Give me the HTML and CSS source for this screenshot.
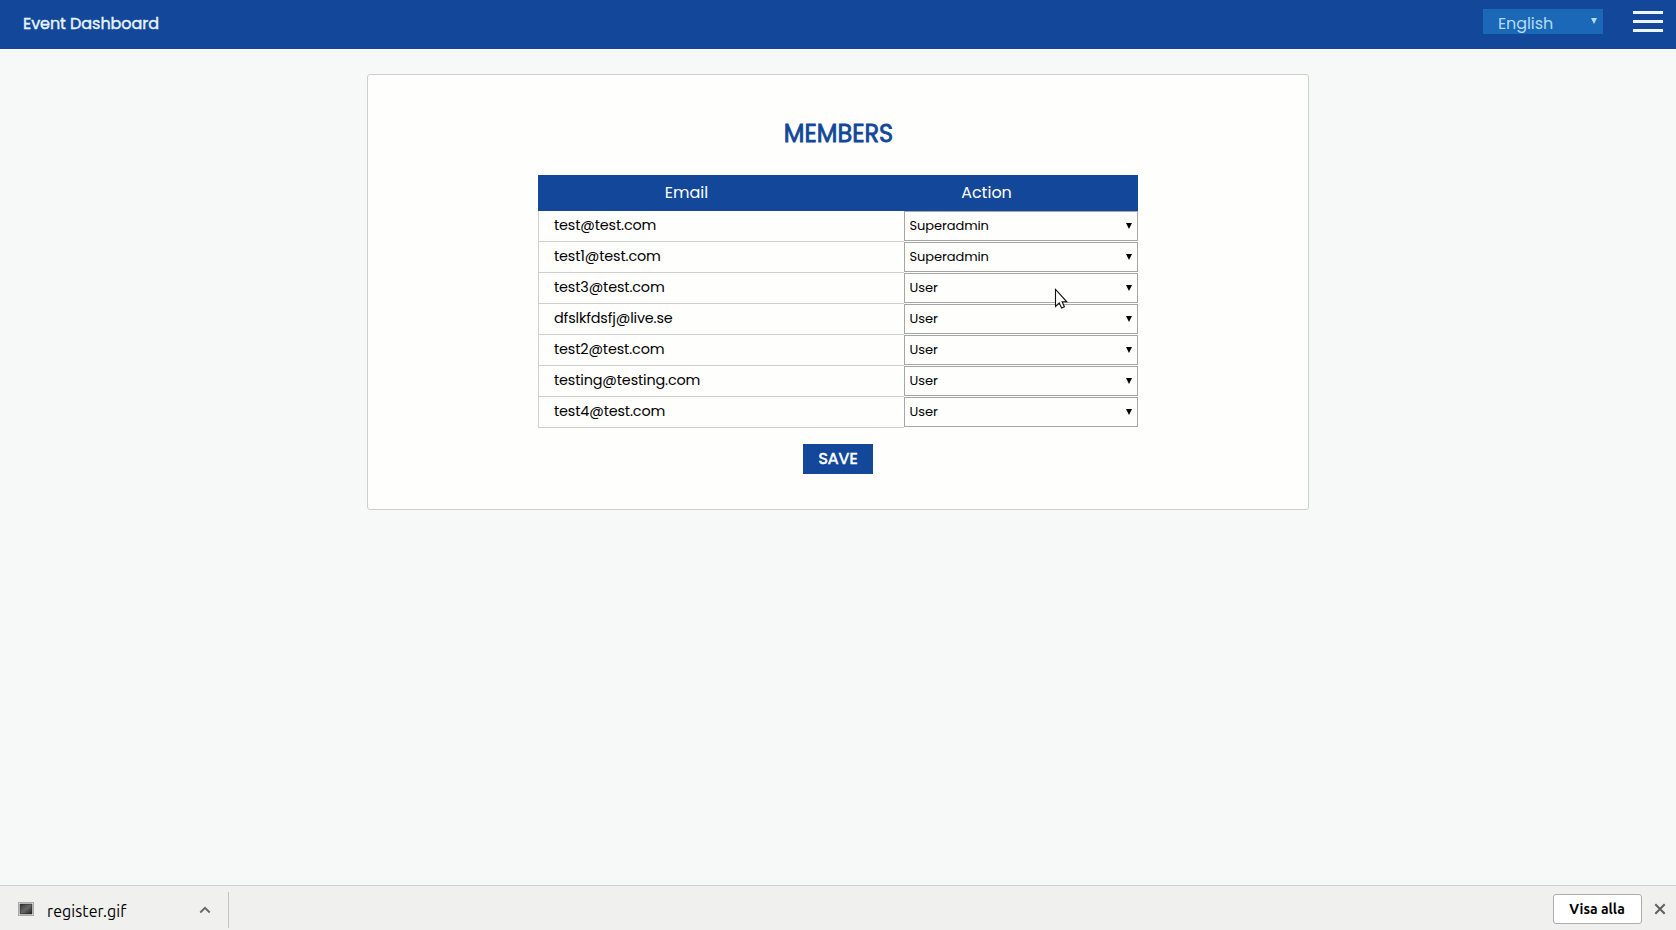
FILE: index.html
```html
<!DOCTYPE html>
<html lang="en">
<head>
<meta charset="utf-8">
<title>Event Dashboard</title>
<link rel="stylesheet" href="styles.css">
</head>
<body>
<header class="topbar">
  <span class="brand">Event Dashboard</span>
  <div class="tools">
    <div class="language"><span>English</span><i class="arrow arrow-light"></i></div>
    <div class="menu"><i></i><i></i><i></i></div>
  </div>
</header>
<main class="content">
  <section class="card">
    <h1 class="title">MEMBERS</h1>
    <div class="table">
      <div class="head"><span class="head-email">Email</span><span class="head-action">Action</span></div>
      <div class="row"><span class="email">test@test.com</span><div class="select"><span>Superadmin</span><i class="arrow"></i></div></div>
      <div class="row"><span class="email">test1@test.com</span><div class="select"><span>Superadmin</span><i class="arrow"></i></div></div>
      <div class="row"><span class="email">test3@test.com</span><div class="select"><span>User</span><i class="arrow"></i></div></div>
      <div class="row"><span class="email">dfslkfdsfj@live.se</span><div class="select"><span>User</span><i class="arrow"></i></div></div>
      <div class="row"><span class="email">test2@test.com</span><div class="select"><span>User</span><i class="arrow"></i></div></div>
      <div class="row"><span class="email">testing@testing.com</span><div class="select"><span>User</span><i class="arrow"></i></div></div>
      <div class="row"><span class="email">test4@test.com</span><div class="select"><span>User</span><i class="arrow"></i></div></div>
    </div>
    <button class="save">SAVE</button>
  </section>
</main>
<footer class="downloads">
  <div class="file">
    <svg class="thumb" width="16" height="14" viewBox="0 0 16 14"><defs><linearGradient id="g" x1="0" y1="0" x2="1" y2="1"><stop offset="0" stop-color="#333"/><stop offset=".5" stop-color="#666"/><stop offset="1" stop-color="#222"/></linearGradient></defs><rect x=".5" y=".5" width="15" height="13" fill="#f4f4f4" stroke="#aaa"/><rect x="2" y="2" width="12" height="10" fill="url(#g)" stroke="#222" stroke-width=".6"/></svg>
    <span class="filename">register.gif</span>
    <svg class="chevron" width="12" height="8" viewBox="0 0 12 8"><path d="M1.3 6.5 6 1.8l4.7 4.7" fill="none" stroke="#666" stroke-width="1.8"/></svg>
  </div>
  <div class="download-actions">
    <button class="show-all">Visa alla</button>
    <svg width="12" height="12" viewBox="0 0 12 12"><path d="M1.3 1.3l9.4 9.4M10.7 1.3l-9.4 9.4" stroke="#606060" stroke-width="2"/></svg>
  </div>
</footer>
<svg class="cursor" width="15" height="22" viewBox="0 0 15 22"><path d="M1.5 1.5v17l3.7-3.5 2.4 5 2.8-1.2-2.3-5h4.7z" fill="#fff" stroke="#111" stroke-width="1.1"/></svg>
</body>
</html>
```
FILE: styles.css
```css
* { box-sizing: border-box; }
body {
  margin: 0;
  height: 930px;
  display: flex;
  flex-direction: column;
  overflow: hidden;
  background: #f7f9f9;
  color: #000;
  font-family: Poppins, Inter, "Open Sans", sans-serif;
}
.topbar {
  height: 49px;
  flex: none;
  display: flex;
  justify-content: space-between;
  padding: 0 13px 0 23px;
  background: #124799;
}
.brand {
  line-height: 48px;
  font-size: 16px;
  font-weight: 400;
  letter-spacing: -.06px;
  -webkit-text-stroke: .4px #e6f4fc;
  color: #e6f4fc;
}
.tools { display: flex; gap: 30px; }
.language {
  width: 120px;
  height: 25px;
  margin-top: 9px;
  padding: 0 6px 0 15px;
  display: flex;
  justify-content: space-between;
  background: #1b68b9;
  color: #b4dcee;
  font-size: 16px;
  letter-spacing: -.1px;
  line-height: 30px;
}
.arrow {
  width: 6px;
  height: 6px;
  background: #000;
  clip-path: polygon(0 0, 100% 0, 50% 100%);
}
.arrow-light { margin-top: 9px; background: #b4dcee; }
.menu {
  width: 30px;
  margin-top: 11px;
  display: flex;
  flex-direction: column;
  gap: 6px;
}
.menu i { height: 3px; background: #eef5ff; }
.content { flex: 1; padding-top: 25px; }
.card {
  width: 942px;
  height: 436px;
  margin: 0 auto;
  padding-top: 42px;
  display: flex;
  flex-direction: column;
  align-items: center;
  background: #fefefd;
  border: 1px solid #cecece;
  border-radius: 3px;
}
.title {
  height: 58px;
  margin: 0;
  padding-left: 1px;
  font-size: 24px;
  line-height: 34px;
  font-weight: 400;
  -webkit-text-stroke: .8px #124799;
  color: #124799;
}
.table { width: 600px; }
.head {
  height: 36px;
  display: flex;
  background: #124799;
  color: #fff;
  font-size: 16px;
  line-height: 35px;
  text-align: center;
}
.head-email { width: 297px; }
.head-action { width: 303px; }
.row { height: 31px; display: flex; }
.email {
  width: 366px;
  padding-left: 15px;
  border-left: 1px solid #cecece;
  border-bottom: 1px solid #cecece;
  font-size: 14.4px;
  letter-spacing: -.15px;
  line-height: 29px;
}
.select {
  width: 234px;
  height: 30px;
  padding: 0 5px 0 4.5px;
  display: flex;
  align-items: center;
  justify-content: space-between;
  border: 1px solid #a6a6a6;
  font-size: 13px;
  letter-spacing: -.08px;
}
.save {
  width: 70px;
  height: 30px;
  margin-top: 16px;
  padding: 0;
  border: 0;
  background: #124799;
  color: #fff;
  font: 400 16px/28px Poppins, Inter, sans-serif;
  -webkit-text-stroke: .6px #fff;
}
.downloads {
  height: 45px;
  flex: none;
  display: flex;
  justify-content: space-between;
  background: #f0f0ef;
  border-top: 1px solid #c9d0cf;
  font-family: Ubuntu, "Noto Sans", sans-serif;
}
.file {
  width: 229px;
  height: 36px;
  margin-top: 6px;
  padding: 0 17px 0 18px;
  display: flex;
  align-items: center;
  border-right: 1px solid #c4c4c4;
}
.thumb { margin-bottom: 3px; }
.filename {
  margin-left: 13px;
  padding-top: 2px;
  font-size: 16px;
  letter-spacing: .08px;
  color: #000;
}
.chevron { margin-left: auto; }
.download-actions {
  display: flex;
  align-items: center;
  gap: 13px;
  padding: 0 10px 0 0;
  height: 46px;
}
.show-all {
  width: 89px;
  height: 30px;
  padding: 0;
  margin-right: -.5px;
  border: 1px solid #adadad;
  border-radius: 3px;
  background: #fff;
  color: #000;
  font: 600 14px/26px Ubuntu, "Noto Sans", sans-serif;
}
.cursor { position: absolute; left: 1054px; top: 288px; }
```
